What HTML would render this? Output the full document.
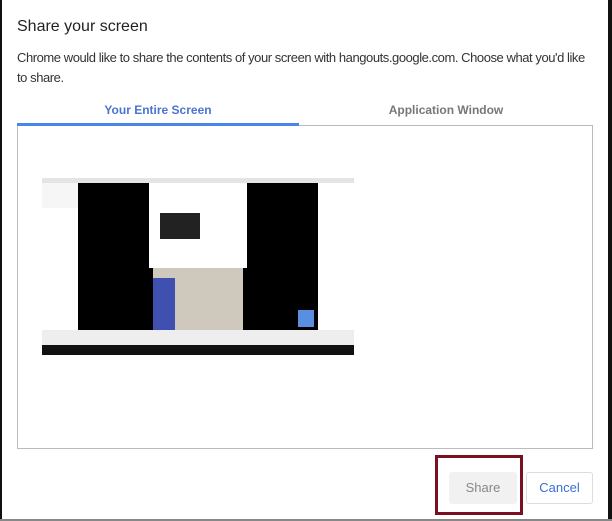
<!DOCTYPE html><html><head><style>
body{margin:0;width:612px;height:521px;background:#fff;position:relative;overflow:hidden;font-family:"Liberation Sans",sans-serif}
.a{position:absolute}
</style></head><body>
<div class="a" style="left:0;top:0;width:2px;height:521px;background:#111"></div>
<div class="a" style="left:608px;top:0;width:4px;height:521px;background:#111"></div>
<div class="a" style="left:0;top:519px;width:612px;height:2px;background:#888"></div>
<div class="a" style="left:17px;top:18px;font-size:16px;color:#222">Share your screen</div>
<div class="a" style="left:17px;top:48px;width:580px;font-size:13px;letter-spacing:-0.44px;line-height:20px;color:#333">Chrome would like to share the contents of your screen with hangouts.google.com. Choose what you'd like to share.</div>
<div class="a" style="left:17px;top:103px;width:282px;text-align:center;font-size:12px;font-weight:bold;color:#4a74d0">Your Entire Screen</div>
<div class="a" style="left:299px;top:103px;width:294px;text-align:center;font-size:12px;font-weight:bold;color:#777">Application Window</div>
<div class="a" style="left:17px;top:125px;width:574px;height:322px;border:1px solid #bbb"></div>
<div class="a" style="left:17px;top:123px;width:282px;height:3px;background:#4a86e8"></div>
<div class="a" style="left:42px;top:178px;width:312px;height:177px;background:#fff">
 <div class="a" style="left:0;top:0;width:312px;height:5px;background:#e4e4e4"></div>
 <div class="a" style="left:0;top:5px;width:36px;height:25px;background:#f6f6f6"></div>
 <div class="a" style="left:36px;top:5px;width:240px;height:147px;background:#000"></div>
 <div class="a" style="left:107px;top:5px;width:98px;height:85px;background:#fff"></div>
 <div class="a" style="left:118px;top:35px;width:40px;height:26px;background:#222"></div>
 <div class="a" style="left:111px;top:90px;width:90px;height:62px;background:#cfc8bc"></div>
 <div class="a" style="left:111px;top:100px;width:22px;height:52px;background:#4050b0"></div>
 <div class="a" style="left:256px;top:132px;width:16px;height:17px;background:#5a8ee0"></div>
 <div class="a" style="left:0;top:152px;width:312px;height:15px;background:#eee"></div>
 <div class="a" style="left:0;top:167px;width:312px;height:10px;background:#111"></div>
</div>
<div class="a" style="left:449px;top:472px;width:68px;height:32px;background:#f1f1f1;border-radius:3px;font-size:13px;color:#888;text-align:center;line-height:32px">Share</div>
<div class="a" style="left:526px;top:472px;width:65px;height:30px;border:1px solid #ddd;border-radius:3px;font-size:13px;color:#3a6fd8;text-align:center;line-height:30px">Cancel</div>
<div class="a" style="left:435px;top:455px;width:88px;height:60px;border:3px solid #7a1020;box-sizing:border-box"></div>
</body></html>
